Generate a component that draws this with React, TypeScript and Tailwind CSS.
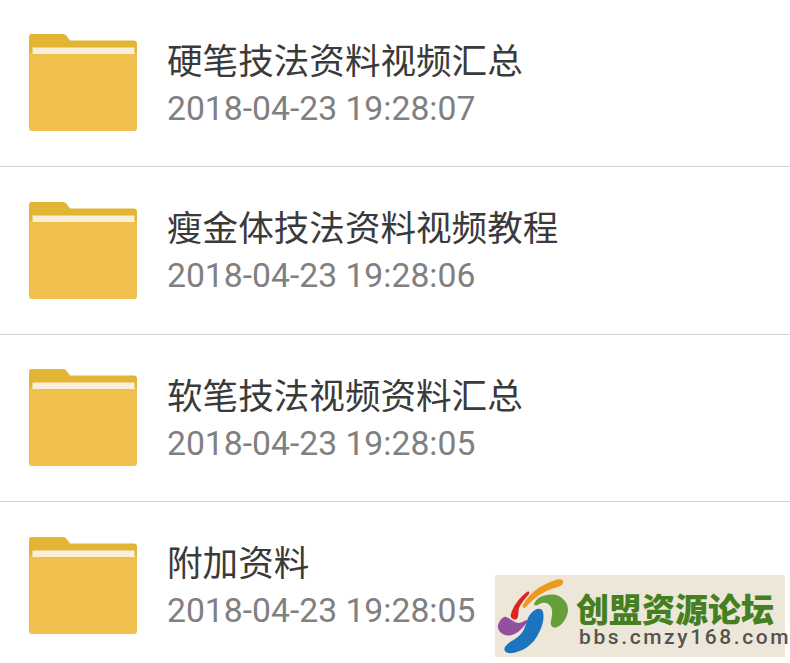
const items = [
  { name: "硬笔技法资料视频汇总", time: "2018-04-23 19:28:07" },
  { name: "瘦金体技法资料视频教程", time: "2018-04-23 19:28:06" },
  { name: "软笔技法视频资料汇总", time: "2018-04-23 19:28:05" },
  { name: "附加资料", time: "2018-04-23 19:28:05" },
];

function Folder() {
  return (
    <svg width="110" height="100" viewBox="0 0 110 100" className="mt-[1px] shrink-0">
      <path d="M1 3.5C1 2 2 1 3.5 1H35C37 1 38 2 39 3.5L42 7.5H106C107.7 7.5 109 8.8 109 10.5V20H1Z" fill="#e3b535" />
      <rect x="4.5" y="14.5" width="102" height="6.5" fill="#f9eeda" />
      <path d="M1 20H4.5V21H106.5V20H109V95C109 96.7 107.7 98 106 98H4C2.3 98 1 96.7 1 95Z" fill="#f0c04c" />
    </svg>
  );
}

function Logo() {
  return (
    <div className="absolute left-[495px] top-[575px] flex h-[82px] w-[290px] items-start bg-[#ece7d8]">
      <svg width="76" height="82" viewBox="0 0 76 82" className="shrink-0">
        <path d="M28 30C33 20 44 10 62 4.500C66 3.500 69 5 68 8C67 11 63 12 58 13.500C47 17 38 24 31 32C28 34 27 32 28 30Z" fill="#ec9a1f" />
        <path d="M32 17C34 16 35 17 34 19C30 24 26 28 24 33C23 38 24 43 21 44.500C17 45 15 42 16 39C18 31 25 22 32 17Z" fill="#dc2420" />
        <path d="M3 50C5 45 8 41 11 42C15 43 19 48 24 48C27 48 30 45 32 45C33 47 31 49 29 51C25 56 20 60 14 60.500C8 61 2 56 3 50Z" fill="#93509f" />
        <path d="M40 35C43 33 47 33 48 37C50 45 46 55 41 63C36 71 26 77 17 78C11 79 8 76 10 72C13 67 20 65 25 60C30 55 31 48 33 43C35 39 37 37 40 35Z" fill="#1a74c0" />
        <path d="M40 27C43 22 49 20 55 19.500C61 19 66 21 69 25C73 29 74 35 72 40C70 46 66 51 61 52.500C57 53 55 50 56 46C57 41 58 36 56 32C54 28 50 27 47 28C44 29 42 31 40 30.500C39 30 39 28 40 27Z" fill="#669e3a" />
      </svg>
      <div className="ml-[5px] mt-[16px] flex flex-col items-start">
        <span className="text-[33px] leading-[34px] font-black text-[#457f1f] [font-family:'Noto_Sans_CJK_SC',sans-serif]">创盟资源论坛</span>
        <span className="ml-[3px] text-[21px] leading-[24px] tracking-[2.6px] font-medium text-[#55534f] [font-family:Roboto,sans-serif]">bbs.cmzy168.com</span>
      </div>
    </div>
  );
}

export default function App() {
  return (
    <div className="relative h-[663px] w-[790px] overflow-hidden bg-white">
      <div className="mt-[-0.5px] flex flex-col">
        {items.map((item) => (
          <div key={item.name} className="flex h-[167.5px] shrink-0 items-center border-b border-[#d2d2d2] pl-[28px]">
            <Folder />
            <div className="ml-[29px] flex flex-col pt-[2px]">
              <span className="text-[35.6px] leading-[44px] text-[#3a3a3a] [font-family:'Noto_Sans_CJK_SC',sans-serif]">{item.name}</span>
              <span className="mt-[6px] text-[33.7px] leading-[44px] text-[#808080] [font-family:Roboto,sans-serif]">{item.time}</span>
            </div>
          </div>
        ))}
      </div>
      <Logo />
    </div>
  );
}
